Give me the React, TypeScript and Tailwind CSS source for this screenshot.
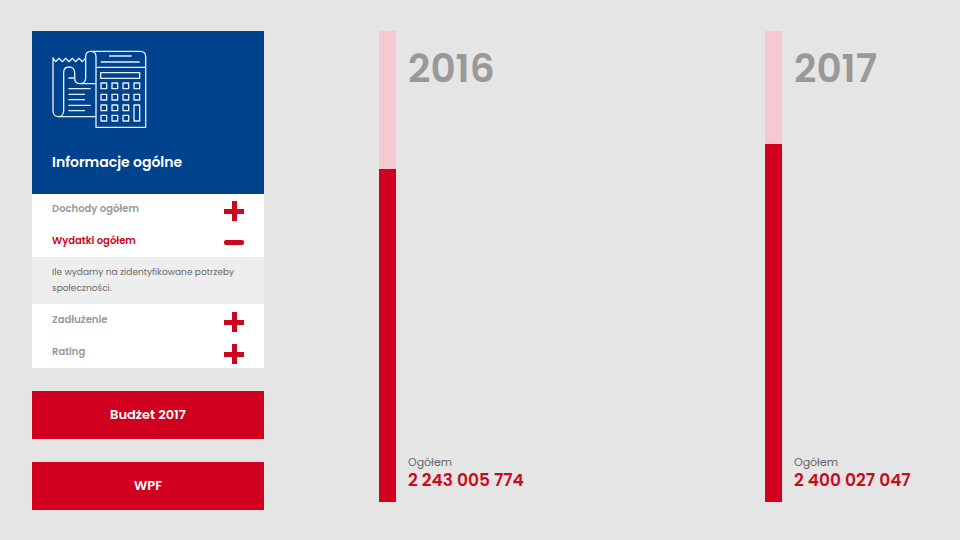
import { useState } from 'react'

interface Topic {
  id: string
  label: string
  text: string
}

const TOPICS: Topic[] = [
  { id: 'income',   label: 'Dochody ogółem', text: '' },
  { id: 'expenses', label: 'Wydatki ogółem', text: 'Ile wydamy na zidentyfikowane potrzeby społeczności.' },
  { id: 'debt',     label: 'Zadłużenie',     text: '' },
  { id: 'rating',   label: 'Rating',         text: '' },
]

const YEARS = [
  { year: 2016, total: '2 243 005 774', fill: 70.7 },
  { year: 2017, total: '2 400 027 047', fill: 76 },
]

function BudgetIcon() {
  return (
    <svg
      viewBox="59 59 285 234"
      className="w-[95px] h-[78px]"
      fill="none"
      stroke="#e3efff"
      strokeWidth="4"
      strokeLinejoin="round"
      aria-hidden="true"
    >
      {/* Receipt */}
      <path d="M191 259H78c-10 0-16-8-16-18V83l8 11 10-10 10 10 10-10 10 10 10-10 10 10 10-10 10 10 9-10" />
      <path d="M78 259c10 0 16-8 16-18V127c0-10 6-17 16-17s17 7 17 17v16c0 10 6 17 16 17s17-7 17-17V79c0-10 6-16 15-16h149c10 0 16 6 16 16v212H191V79c0-10-6-16-16-16" />
      <path d="M143 160h48M108 143h19M108 175h67M108 192h50M108 208h50M108 225h67M108 241h50" />
      {/* Calculator */}
      <path d="M230 77h68M205 95h117M191 111h149" />
      <path d="M205 127h117v17H205z" />
      {[158, 192, 224, 255].map(y =>
        [206, 239, 272, 305].map(x =>
          x === 305 && y > 200 ? null : <rect key={`${x}-${y}`} x={x} y={y} width="17" height="17" />
        )
      )}
      <rect x="305" y="224" width="17" height="48" />
    </svg>
  )
}

function ToggleIcon({ open }: { open: boolean }) {
  return (
    <svg viewBox="0 0 20 20" className="w-5 h-5 shrink-0" fill="#cb0720" aria-hidden="true">
      {open ? <rect y="7" width="20" height="5" rx="2" /> : <path d="M8 0h5v8h7v5h-7v7H8v-7H0V8h8z" />}
    </svg>
  )
}

export default function App() {
  const [openId, setOpenId] = useState('expenses')

  return (
    <div className="flex min-h-screen items-start bg-[#e5e5e5] pt-[31px] pl-8 pr-0.5 font-['Poppins','Inter',sans-serif]">
      <div className="flex w-full">
        {/* Sidebar */}
        <aside className="flex w-[232px] shrink-0 flex-col gap-[23px]">
          <section>
            <header className="bg-[#00428b] px-5 pt-[19px] pb-[22px]">
              <BudgetIcon />
              <h2 className="mt-6 text-[14px] leading-5 font-semibold text-white">Informacje ogólne</h2>
            </header>
            <ul className="flex flex-col gap-px bg-white">
              {TOPICS.map(topic => {
                const open = topic.id === openId
                return (
                  <li key={topic.id}>
                    <button
                      type="button"
                      aria-expanded={open}
                      onClick={() => setOpenId(open ? '' : topic.id)}
                      className={`flex h-[31px] w-full items-start justify-between px-5 pt-[7px] text-left text-[10px] leading-4 font-semibold ${open ? 'text-[#cb0720]' : 'text-[#999999]'}`}
                    >
                      {topic.label}
                      <ToggleIcon open={open} />
                    </button>
                    {open && topic.text && (
                      <p className="bg-[#eeeeee] px-5 pt-[7px] pb-2 text-[9px] leading-4 text-[#6b6b6b]">{topic.text}</p>
                    )}
                  </li>
                )
              })}
            </ul>
          </section>
          <button type="button" className="h-12 bg-[#d0001e] text-[13px] leading-4 font-semibold text-white">Budżet 2017</button>
          <button type="button" className="h-12 bg-[#d0001e] text-[13px] leading-4 font-semibold text-white">WPF</button>
        </aside>

        {/* Yearly totals */}
        <main className="mb-2 ml-[115px] grid grow grid-cols-[2fr_1fr]">
          {YEARS.map(item => (
            <section key={item.year} className="flex gap-3">
              <div className="flex w-[17px] shrink-0 flex-col justify-end bg-[#f6c9d1]">
                <div className="bg-[#d0001e]" style={{ height: `${item.fill}%` }} />
              </div>
              <div className="flex flex-col justify-between pt-[17px] pb-3">
                <h1 className="text-[39px] leading-[42px] font-semibold text-[#999999]">{item.year}</h1>
                <div>
                  <p className="text-[11px] leading-4 text-[#666666]">Ogółem</p>
                  <p className="text-[17px] leading-5 font-semibold whitespace-nowrap text-[#c60c22]">{item.total}</p>
                </div>
              </div>
            </section>
          ))}
        </main>
      </div>
    </div>
  )
}
